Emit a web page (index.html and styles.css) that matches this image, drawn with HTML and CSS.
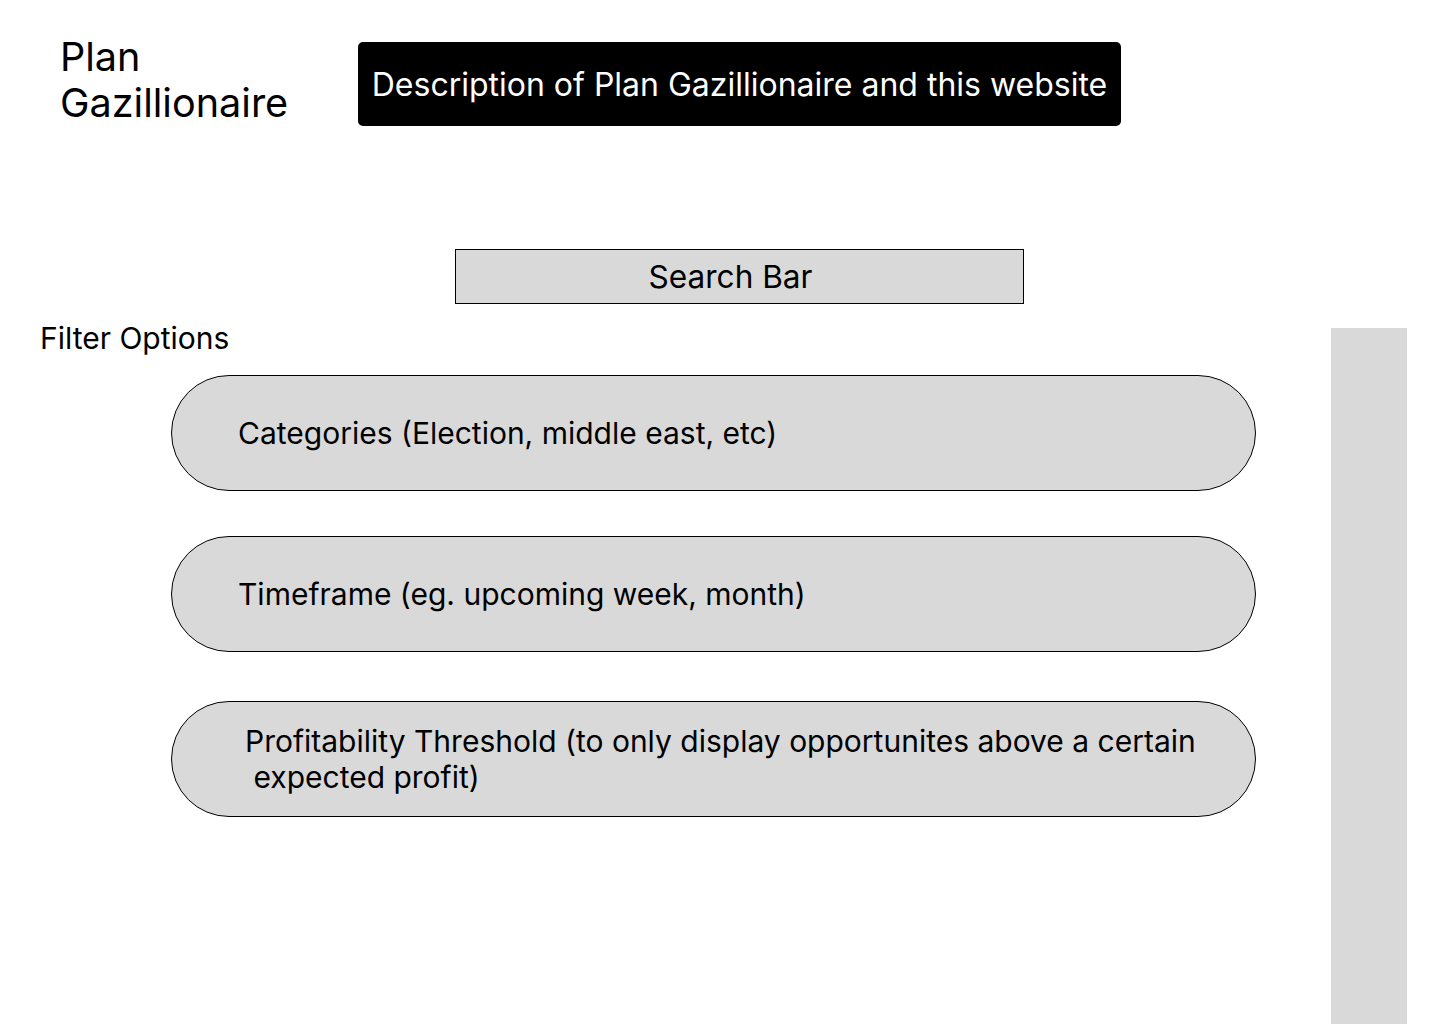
FILE: index.html
```html
<!DOCTYPE html>
<html lang="en">
<head>
<meta charset="utf-8">
<title>Plan Gazillionaire</title>
<link rel="stylesheet" href="styles.css">
</head>
<body>
<header class="header">
  <h1 class="title">Plan<br>Gazillionaire</h1>
  <div class="desc">Description of Plan Gazillionaire and this website</div>
</header>
<div class="search">Search Bar</div>
<main class="main">
  <section class="filters">
    <h2 class="filters-label">Filter Options</h2>
    <div class="pills">
      <div class="pill">Categories (Election, middle east, etc)</div>
      <div class="pill">Timeframe (eg. upcoming week, month)</div>
      <div class="pill pill-wide">Profitability Threshold (to only display opportunites above a certain<br>&nbsp;expected profit)</div>
    </div>
  </section>
  <aside class="sidebar"></aside>
</main>
</body>
</html>
```

FILE: styles.css
```css
* { box-sizing: border-box; }
html, body { margin: 0; padding: 0; background: #fff; }
body {
  font-family: Inter, "Noto Sans", sans-serif;
  color: #000;
  height: 1024px;
  overflow: hidden;
}
.header {
  display: flex;
  align-items: flex-start;
  padding: 34px 0 0 60px;
}
.title {
  margin: 0;
  width: 298px;
  font-size: 39.6px;
  font-weight: 400;
  line-height: 46px;
}
.desc {
  margin-top: 8px;
  width: 763px;
  height: 84px;
  background: #000;
  color: #fff;
  border-radius: 5px;
  display: flex;
  align-items: center;
  justify-content: center;
  font-size: 32px;
}
.search {
  margin: 123px 0 0 455px;
  width: 569px;
  height: 55px;
  background: #d9d9d9;
  border: 1px solid #000;
  display: flex;
  align-items: center;
  justify-content: center;
  padding-right: 18px;
  font-size: 31.6px;
}
.main {
  display: flex;
  align-items: flex-start;
}
.filters {
  flex: 1;
}
.filters-label {
  margin: 16px 0 0 40px;
  font-size: 30px;
  font-weight: 400;
  line-height: 36px;
}
.pills {
  margin: 19px 0 0 171px;
  width: 1085px;
  display: flex;
  flex-direction: column;
  gap: 45px;
}
.pill {
  height: 116px;
  background: #d9d9d9;
  border: 1px solid #000;
  border-radius: 58px;
  display: flex;
  align-items: center;
  padding-left: 66px;
  font-size: 30px;
  line-height: 36px;
}
.pill-wide {
  margin-top: 4px;
  padding-left: 73px;
}
.sidebar {
  margin: 24px 33px 0 0;
  width: 76px;
  height: 700px;
  background: #d9d9d9;
}
```
